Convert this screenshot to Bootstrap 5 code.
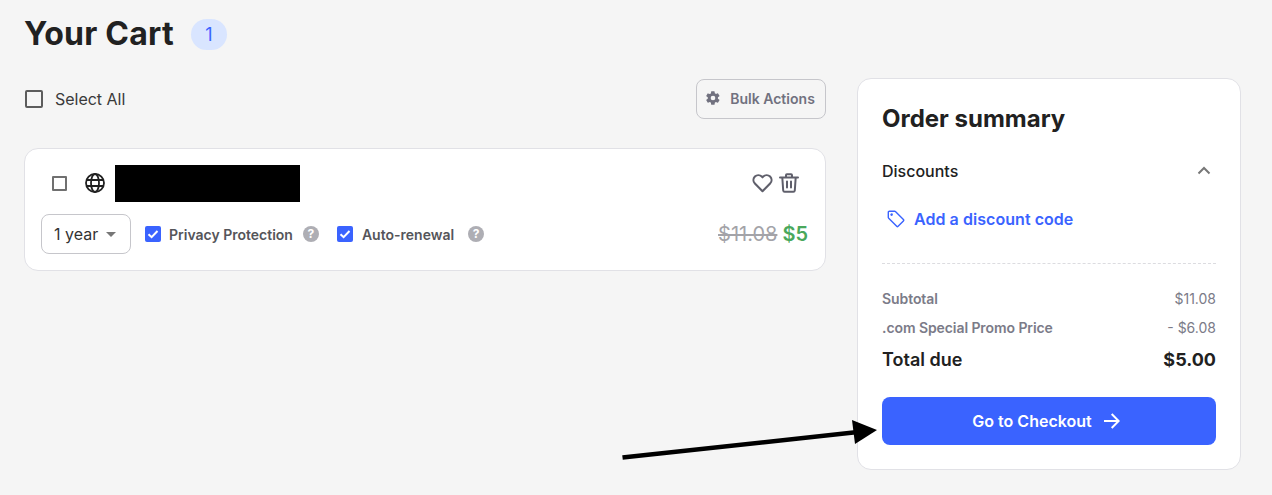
<!DOCTYPE html>
<html lang="en">
  <head>
    <meta charset="UTF-8" />
    <meta name="viewport" content="width=device-width, initial-scale=1.0" />
    <title>Your Cart</title>
    <link href="https://cdn.jsdelivr.net/npm/bootstrap@5.3.3/dist/css/bootstrap.min.css" rel="stylesheet" />
    <style>
      html, body { height: 100%; overflow: hidden; }
      body {
        font-family: Inter, "Liberation Sans", sans-serif;
        background: #f5f5f5;
        color: #212121;
        position: relative;
      }
      .cart-page { padding: 0 31px 0 24px; }
      .cart-title { font-size: 32px; font-weight: 700; line-height: 38px; margin: 0; letter-spacing: 0.25px; }
      .cart-count {
        width: 36px; height: 31px; background: #d9e5ff; color: #3a63ff;
        font-size: 18px; border-radius: 16px; margin-left: 17px; margin-top: 4px;
      }
      .cart-head { height: 68px; padding-top: 15px; }
      .cart-main { width: 802px; }
      .summary-col { width: 384px; margin-left: 31px; margin-top: 78px; }
      .tool-row { height: 40px; margin-top: 11px; }
      .box-lg { width: 18px; height: 18px; border: 2px solid #5c5c5c; border-radius: 2px; margin-left: 1px; }
      .select-label { font-size: 16px; color: #3a3a3a; margin-left: 12px; letter-spacing: -0.02px; }
      .bulk-btn {
        width: 130px; height: 40px; border: 1px solid #c6c6cb; border-radius: 8px;
        background: transparent; color: #71717f; font-size: 14px; font-weight: 600; padding: 0 2px 2px 0;
        gap: 9px; letter-spacing: 0.02px;
      }
      .item-box {
        height: 123px; margin-top: 29px; background: #fff; border: 1px solid #e1e1e6;
        border-radius: 14px; padding: 16px 17px 0 16px;
      }
      .item-top { height: 37px; padding: 0 9px 0 11px; }
      .box-sm { width: 15px; height: 15px; border: 2px solid #707070; border-radius: 1px; margin-top: -1px; }
      .item-globe { margin-left: 18px; margin-top: -1px; }
      .name-mask { width: 185px; height: 37px; background: #000; margin-left: 10px; }
      .item-actions { gap: 6px; margin-top: -2px; }
      .item-bottom { height: 40px; margin-top: 12px; }
      .term-select {
        width: 90px; height: 40px; border: 1px solid #c6c6cb; border-radius: 8px;
        font-size: 16px; color: #333; padding-left: 12px; background: #fff;
      }
      .term-caret {
        width: 0; height: 0; border-left: 5px solid transparent; border-right: 5px solid transparent;
        border-top: 5px solid #777; margin-left: 8px;
      }
      .check-on { width: 16px; height: 16px; background: #3a63ff; border-radius: 2px; margin-right: 8px; }
      .check-first { margin-left: 14px; }
      .check-next { margin-left: 18px; margin-right: 9px; }
      .opt-label { font-size: 14px; font-weight: 600; color: #55555a; }
      .help-dot {
        width: 16px; height: 16px; border-radius: 50%; background: #aeaeb4; color: #fff;
        font-size: 12px; font-weight: 700; line-height: 16px; text-align: center;
      }
      .help-first { margin-left: 10px; }
      .help-next { margin-left: 14px; }
      .price-old { font-size: 20px; color: #a3a3a8; text-decoration: line-through; }
      .price-new { font-size: 20px; font-weight: 600; color: #4aa85c; margin-left: 5px; }
      .summary-box {
        height: 392px; background: #fff; border: 1px solid #e1e1e6; border-radius: 14px; padding: 25px 24px 0;
      }
      .summary-title { font-size: 24px; font-weight: 700; line-height: 30px; margin: 0; }
      .disc-row { height: 20px; margin-top: 27px; font-size: 16px; font-weight: 500; }
      .disc-chevron { margin-right: 5px; margin-top: -1px; }
      .disc-link { height: 24px; margin-top: 26px; color: #3a63ff; font-size: 16px; font-weight: 600; padding-left: 5px; gap: 9px; letter-spacing: 0.05px; }
      .dash-rule { border-top: 1px dashed #dcdce0; margin-top: 32px; }
      .cost-row { font-size: 14px; color: #7b7b88; height: 20px; margin-top: 9px; }
      .cost-row b { font-weight: 600; letter-spacing: -0.08px; }
      .cost-first { margin-top: 24px; }
      .total-row { font-size: 18px; font-weight: 600; height: 24px; margin-top: 10px; }
      .total-row b { font-weight: 700; }
      .checkout-btn {
        height: 48px; margin-top: 26px; background: #3a63ff; color: #fff; border: 0;
        border-radius: 8px; font-size: 16px; font-weight: 600; width: 100%; gap: 12px; padding: 0 6px 0 0;
      }
      .note-arrow { position: absolute; left: 620px; top: 415px; }
    </style>
  </head>
  <body>
    <div class="cart-page d-flex">
      <div class="cart-main">
        <div class="cart-head d-flex align-items-start">
          <h1 class="cart-title">Your Cart</h1>
          <span class="cart-count d-flex align-items-center justify-content-center">1</span>
        </div>
        <div class="tool-row d-flex align-items-center justify-content-between">
          <div class="d-flex align-items-center">
            <span class="box-lg"></span>
            <span class="select-label">Select All</span>
          </div>
          <button class="bulk-btn d-flex align-items-center justify-content-center">
            <svg width="16" height="16" viewBox="0 0 24 24" fill="#71717f"><path fill-rule="evenodd" d="M19.4 13c.04-.33.06-.66.06-1s-.02-.67-.07-1l2.16-1.65a.5.5 0 0 0 .12-.64l-2.05-3.5a.5.5 0 0 0-.62-.22l-2.55 1a7.5 7.5 0 0 0-1.72-1l-.39-2.65A.5.5 0 0 0 13.84 2H9.75a.5.5 0 0 0-.5.42l-.38 2.66c-.62.25-1.2.6-1.73 1l-2.54-1a.5.5 0 0 0-.62.22l-2.05 3.5a.5.5 0 0 0 .12.64L4.2 11a7.6 7.6 0 0 0 0 2l-2.15 1.65a.5.5 0 0 0-.12.64l2.05 3.5c.12.22.39.3.62.22l2.54-1c.53.4 1.11.75 1.73 1l.38 2.65c.04.24.25.42.5.42h4.09a.5.5 0 0 0 .5-.42l.39-2.65c.62-.25 1.2-.6 1.72-1l2.55 1c.23.08.5 0 .62-.22l2.05-3.5a.5.5 0 0 0-.12-.64L19.4 13zM12 15.5a3.5 3.5 0 1 1 0-7 3.5 3.5 0 0 1 0 7z"/></svg>
            Bulk Actions
          </button>
        </div>
        <div class="item-box">
          <div class="item-top d-flex align-items-center">
            <span class="box-sm"></span>
            <svg class="item-globe" width="20" height="20" viewBox="0 0 20 20" fill="none" stroke="#212121" stroke-width="1.8"><circle cx="10" cy="10" r="9"/><ellipse cx="10" cy="10" rx="4" ry="9"/><path d="M1.6 7h16.8M1.6 13h16.8"/></svg>
            <span class="name-mask"></span>
            <div class="item-actions ms-auto d-flex align-items-center">
              <svg width="21" height="20" viewBox="0 0 21 20" fill="none" stroke="#5f5f6b" stroke-width="2.1" stroke-linejoin="round"><path d="M10.5 18.2 2.900 10.600a5 5 0 0 1 0-7 4.900 4.900 0 0 1 6.900 0l.7.7.7-.7a4.900 4.900 0 0 1 6.900 0 5 5 0 0 1 0 7z"/></svg>
              <svg width="20" height="20" viewBox="0 0 20 20" fill="none" stroke="#5f5f6b" stroke-width="2" stroke-linecap="round" stroke-linejoin="round"><path d="M1 4.500h18M7 4.500V2.200c0-.5.4-.9.9-.9h4.200c.5 0 .9.4.9.9v2.300M3.300 4.500l.9 13c.1.8.7 1.300 1.400 1.300h8.800c.7 0 1.300-.5 1.400-1.300l.9-13M8 8.500v6M12 8.500v6"/></svg>
            </div>
          </div>
          <div class="item-bottom d-flex align-items-center">
            <div class="term-select d-flex align-items-center">1 year<span class="term-caret"></span></div>
            <span class="check-on check-first d-flex align-items-center justify-content-center">
              <svg width="12" height="12" viewBox="0 0 12 12" fill="none" stroke="#fff" stroke-width="2"><path d="M1.500 6.200 4.600 9.200 10.500 3"/></svg>
            </span>
            <span class="opt-label">Privacy Protection</span>
            <span class="help-dot help-first">?</span>
            <span class="check-on check-next d-flex align-items-center justify-content-center">
              <svg width="12" height="12" viewBox="0 0 12 12" fill="none" stroke="#fff" stroke-width="2"><path d="M1.500 6.200 4.600 9.200 10.500 3"/></svg>
            </span>
            <span class="opt-label">Auto-renewal</span>
            <span class="help-dot help-next">?</span>
            <div class="ms-auto d-flex align-items-center">
              <span class="price-old">$11.08</span>
              <span class="price-new">$5</span>
            </div>
          </div>
        </div>
      </div>
      <div class="summary-col">
        <div class="summary-box">
          <h2 class="summary-title">Order summary</h2>
          <div class="disc-row d-flex align-items-center justify-content-between">
            <span>Discounts</span>
            <svg class="disc-chevron" width="14" height="9" viewBox="0 0 14 9" fill="none" stroke="#777" stroke-width="2"><path d="M1.500 7.500 7 2l5.500 5.500"/></svg>
          </div>
          <div class="disc-link d-flex align-items-center">
            <svg width="18" height="18" viewBox="0 0 18 18" fill="none" stroke="#3a63ff" stroke-width="1.4" stroke-linejoin="round"><path d="M1.300 2.300c0-.6.4-1 1-1h5.400c.3 0 .5.1.7.3l8 8c.4.4.4 1 0 1.400l-5.300 5.300c-.4.4-1 .4-1.400 0l-8-8c-.2-.2-.4-.4-.4-.7z"/><circle cx="4.600" cy="4.600" r=".6" fill="#3a63ff"/></svg>
            <span>Add a discount code</span>
          </div>
          <div class="dash-rule"></div>
          <div class="cost-row cost-first d-flex justify-content-between align-items-center"><b>Subtotal</b><span>$11.08</span></div>
          <div class="cost-row d-flex justify-content-between align-items-center"><b>.com Special Promo Price</b><span>- $6.08</span></div>
          <div class="total-row d-flex justify-content-between align-items-center"><span>Total due</span><b>$5.00</b></div>
          <button class="checkout-btn d-flex align-items-center justify-content-center">
            Go to Checkout
            <svg width="16" height="16" viewBox="0 0 16 16" fill="none" stroke="#fff" stroke-width="2"><path d="M0 8h14.500M7.700 1l7 7-7 7"/></svg>
          </button>
        </div>
      </div>
    </div>
    <svg class="note-arrow" width="262" height="48" viewBox="0 0 262 48">
      <line x1="2.500" y1="42.500" x2="238" y2="17" stroke="#000" stroke-width="4.500"/>
      <polygon points="232,5 257,15 235,29" fill="#000"/>
    </svg>
    <script src="https://cdn.jsdelivr.net/npm/bootstrap@5.3.3/dist/js/bootstrap.bundle.min.js"></script>
  </body>
</html>
